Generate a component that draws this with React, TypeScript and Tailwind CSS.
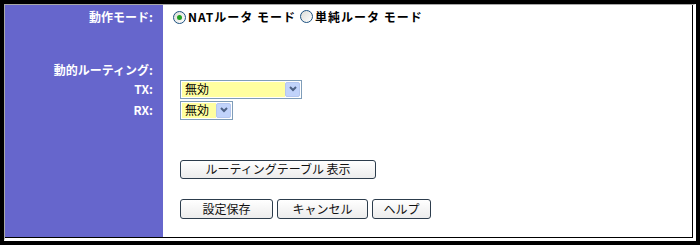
import React from 'react';

const font = { fontFamily: '"Noto Sans CJK JP", "Liberation Sans", sans-serif' };

function Radio({ checked }: { checked?: boolean }) {
  return (
    <span className="inline-flex h-[13px] w-[13px] items-center justify-center rounded-full border border-[#1c5180] bg-gradient-to-br from-[#dcdcd7] to-white">
      {checked ? <span className="h-[5px] w-[5px] rounded-full bg-[#21a121]" /> : null}
    </span>
  );
}

function Select({ value, width }: { value: string; width: string }) {
  return (
    <div className={`flex h-[19px] items-center border border-[#7f9db9] bg-white p-px ${width}`}>
      <div className="flex h-full flex-1 items-center bg-[#ffffa0] pl-[3px] text-[12px] leading-none text-black">{value}</div>
      <div className="flex h-full w-[15px] items-center justify-center rounded-[2px] border border-[#b5c7ef] bg-[#c1d3fb]">
        <svg width="8" height="6" viewBox="0 0 8 6">
          <path d="M1 1 L4 4 L7 1" stroke="#4d6185" strokeWidth="2" fill="none" />
        </svg>
      </div>
    </div>
  );
}

function Btn({ label, width }: { label: string; width: string }) {
  return (
    <button className="flex h-full items-center justify-center rounded-[3px] border border-[#2c3c4c] bg-gradient-to-b from-white to-[#ececec] text-[12px] leading-none text-[#111]">
      <span className={`flex ${width} justify-center`}>{label}</span>
    </button>
  );
}

function Row({ label, h, children }: { label?: string; h: string; children?: React.ReactNode }) {
  return (
    <div className={`flex ${h}`}>
      <div className="flex w-[158px] items-center justify-end bg-[#6666cc] pr-[10px] text-[12px] font-bold leading-none text-white">
        {label}
      </div>
      <div className="flex flex-1 items-center bg-white">{children}</div>
    </div>
  );
}

export default function App() {
  return (
    <div className="h-[245px] w-[700px] bg-black p-[4px]" style={font}>
      <div className="flex h-full flex-col border-l border-t border-[#a8a8a8] border-b-[3px] border-r-[3px] border-b-white border-r-white">
        <div className="flex flex-1 flex-col border-b border-r border-black">
          <Row label="動作モード:" h="h-[24px]">
            <div className="flex items-center pl-[10px] text-[12px] font-bold leading-none tracking-[1px] text-black">
              <Radio checked />
              <span className="ml-[2px]">NATルータ モード</span>
              <span className="ml-[4px]">
                <Radio />
              </span>
              <span className="ml-[2px]">単純ルータ モード</span>
            </div>
          </Row>
          <Row h="h-[32px]" />
          <Row label="動的ルーティング:" h="h-[18px]" />
          <Row label="TX:" h="h-[20px]">
            <div className="pl-[17px]">
              <Select value="無効" width="w-[122px]" />
            </div>
          </Row>
          <Row label="RX:" h="h-[22px]">
            <div className="pl-[17px]">
              <Select value="無効" width="w-[53px]" />
            </div>
          </Row>
          <Row h="h-[38px]" />
          <Row h="h-[20px]">
            <div className="flex h-[19px] pl-[17px]">
              <Btn label="ルーティングテーブル 表示" width="w-[194px]" />
            </div>
          </Row>
          <Row h="h-[19px]" />
          <Row h="h-[21px]">
            <div className="flex h-[20px] gap-[4px] pl-[17px]">
              <Btn label="設定保存" width="w-[91px]" />
              <Btn label="キャンセル" width="w-[89px]" />
              <Btn label="ヘルプ" width="w-[57px]" />
            </div>
          </Row>
          <div className="flex flex-1">
            <div className="w-[158px] bg-[#6666cc]" />
            <div className="flex-1 bg-white" />
          </div>
        </div>
      </div>
    </div>
  );
}
